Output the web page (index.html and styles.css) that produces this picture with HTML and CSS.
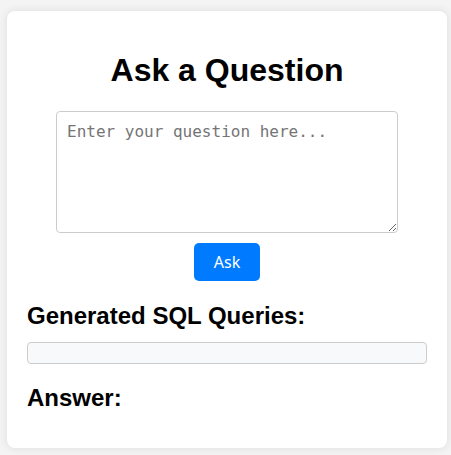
FILE: index.html
```html
<!DOCTYPE html>
<html lang="en">
<head>
<meta charset="utf-8">
<title>Ask a Question</title>
<link rel="stylesheet" href="styles.css">
</head>
<body>
  <div class="card">
    <h1 class="title">Ask a Question</h1>
    <div class="ask-form">
      <textarea class="question" placeholder="Enter your question here..."></textarea>
      <button class="ask-btn" type="button">Ask</button>
    </div>
    <h2 class="section-title">Generated SQL Queries:</h2>
    <div class="sql-box"></div>
    <h2 class="section-title answer-title">Answer:</h2>
  </div>
</body>
</html>
```

FILE: styles.css
```css
html, body {
  margin: 0;
  padding: 0;
}

body {
  background: #f4f4f4;
  font-family: "Liberation Sans", Arial, sans-serif;
  color: #000;
  padding: 11px 4px 8px 7px;
}

.card {
  background: #fff;
  border-radius: 8px;
  box-shadow: 0 0 10px rgba(0, 0, 0, 0.1);
  padding: 20px;
  width: 400px;
}

.title {
  font-size: 32px;
  font-weight: bold;
  text-align: center;
  margin: 21.44px 0;
  line-height: normal;
}

.ask-form {
  display: flex;
  flex-direction: column;
  align-items: center;
  gap: 10px;
}

.question {
  width: 80%;
  height: 100px;
  padding: 10px;
  border: 1px solid #ccc;
  border-radius: 4px;
  font-family: "DejaVu Sans Mono", monospace;
  font-size: 16px;
  margin: 0;
  box-sizing: content-box;
  width: 320px;
}

.question::placeholder {
  color: #757575;
}

.ask-btn {
  background: #007bff;
  color: #fff;
  border: none;
  border-radius: 5px;
  padding: 8px 20px;
  font-family: "Noto Sans", sans-serif;
  font-size: 16px;
  line-height: 22px;
  cursor: pointer;
}

.section-title {
  font-size: 24px;
  font-weight: bold;
  margin: 21.5px 0 12px;
  line-height: normal;
}

.sql-box {
  background: #f8f9fa;
  border: 1px solid #ccc;
  border-radius: 4px;
  padding: 10px;
}

.answer-title {
  margin: 20px 0 15.6px;
}
```
